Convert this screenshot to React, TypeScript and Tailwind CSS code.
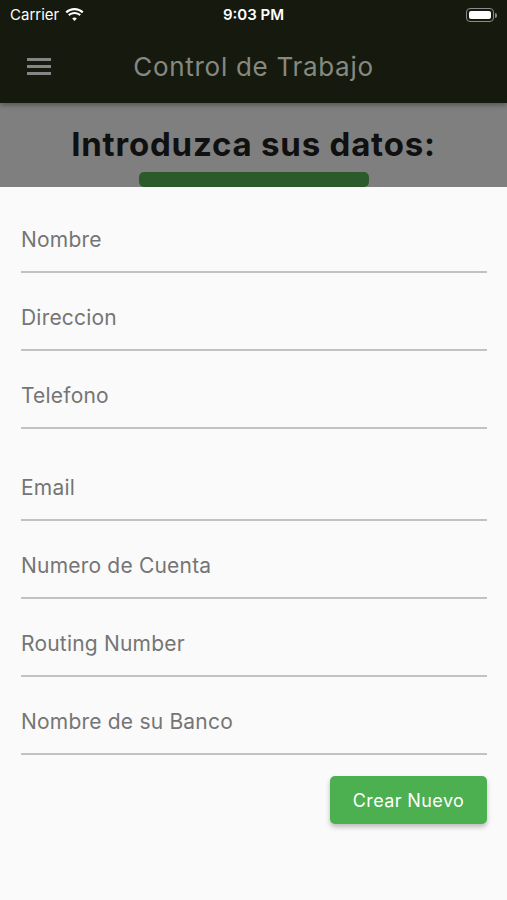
import React from "react";

const fields = [
  { id: 1, label: "Nombre", gap: false },
  { id: 2, label: "Direccion", gap: false },
  { id: 3, label: "Telefono", gap: false },
  { id: 4, label: "Email", gap: true },
  { id: 5, label: "Numero de Cuenta", gap: false },
  { id: 6, label: "Routing Number", gap: false },
  { id: 7, label: "Nombre de su Banco", gap: false },
];

const Wifi = () => (
  <svg width="19" height="14" viewBox="0 0 19 14" fill="white">
    <path d="M9.5 2.2c2.9 0 5.5 1.1 7.5 3l1.5-1.6C16.1 1.3 12.9 0 9.5 0S2.9 1.3.5 3.6L2 5.2c2-1.9 4.6-3 7.5-3z" />
    <path d="M9.5 6c1.9 0 3.6.7 4.9 1.9l1.5-1.6C14.2 4.8 12 3.9 9.5 3.9S4.8 4.8 3.1 6.3l1.5 1.6C5.9 6.7 7.6 6 9.5 6z" />
    <path d="M9.5 9.6c.9 0 1.7.3 2.3.9L9.5 13 7.2 10.5c.6-.6 1.4-.9 2.3-.9z" />
  </svg>
);

const Battery = () => (
  <div className="flex items-center">
    <div className="w-[28px] h-[14px] rounded-[4px] border border-[#8a8a8a] p-[2px]">
      <div className="w-full h-full rounded-[2px] bg-white" />
    </div>
    <div className="w-[2px] h-[5px] rounded-r-sm bg-[#8a8a8a] ml-px" />
  </div>
);

const App = () => {
  return (
    <div className="w-[507px] h-[900px] flex flex-col bg-[#fafafa] font-['Inter',sans-serif] overflow-hidden">
      <div className="bg-[#161a0e] h-[103px] flex flex-col relative z-10 shadow-[0_2px_5px_rgba(0,0,0,0.35)]">
        <div className="h-[30px] flex items-center justify-between px-[10px] relative">
          <div className="flex items-center gap-[6px] text-white text-[15px]">
            <span>Carrier</span>
            <Wifi />
          </div>
          <span className="absolute left-1/2 -translate-x-1/2 text-white text-[15px] font-semibold">9:03 PM</span>
          <Battery />
        </div>
        <div className="flex-1 flex items-center relative">
          <div className="ml-[27px] flex flex-col gap-[4px]">
            <div className="w-[24px] h-[3px] bg-[#858585]" />
            <div className="w-[24px] h-[3px] bg-[#858585]" />
            <div className="w-[24px] h-[3px] bg-[#858585]" />
          </div>
          <span className="absolute left-0 right-0 text-center text-[26px] tracking-[0.7px] text-[#868980] pointer-events-none">
            Control de Trabajo
          </span>
        </div>
      </div>

      <div className="h-[84px] bg-[#7f7f7f] flex flex-col items-center overflow-hidden">
        <h1 className="mt-[21px] text-[33px] tracking-[0.8px] font-bold text-[#101010] leading-[40px]">Introduzca sus datos:</h1>
        <div className="mt-[8px] w-[230px] h-[30px] rounded-[5px] bg-[#2b5a2b]" />
      </div>

      <div className="flex-1 pl-[21px] pr-[20px] pt-[8px]">
        {fields.map((field) => (
          <div
            key={field.id}
            className={
              (field.gap ? "mt-[47px]" : "mt-[33px]") +
              " pb-[19px] border-b-2 border-[#c2c2c2]"
            }
          >
            <div className="h-[24px] leading-[24px] text-[21px] tracking-[0.2px] text-[#757575]">{field.label}</div>
          </div>
        ))}
        <div className="flex justify-end mt-[21px]">
          <button className="w-[157px] h-[48px] rounded-[5px] bg-[#4caf50] text-white text-[18px] tracking-[0.4px] shadow-[0_3px_5px_rgba(0,0,0,0.25)]">
            Crear Nuevo
          </button>
        </div>
      </div>
    </div>
  );
};

export default App;
